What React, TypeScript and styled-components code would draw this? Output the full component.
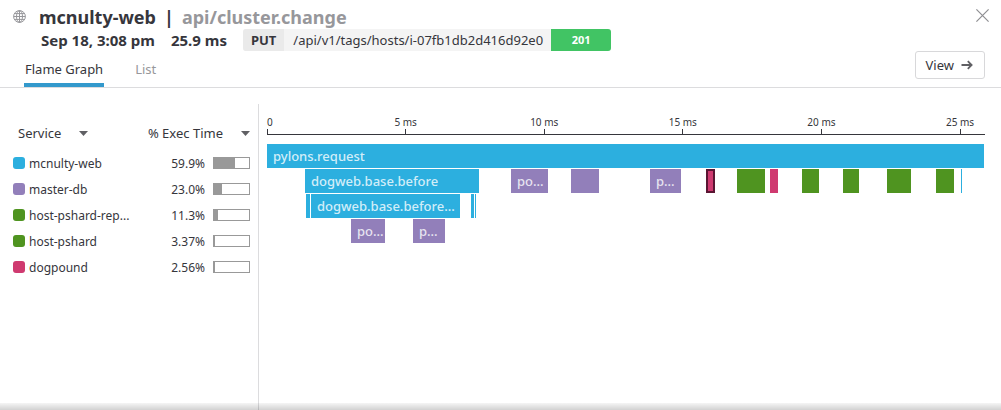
import React from "react";
import styled, { createGlobalStyle } from "styled-components";

const GlobalStyle = createGlobalStyle`
  *, *::before, *::after { box-sizing: border-box; }
  body {
    margin: 0;
    background: #fff;
    color: #36363c;
    font-family: "Noto Sans", "Open Sans", sans-serif;
    font-size: 13px;
  }
  button { font: inherit; color: inherit; cursor: pointer; }
`;

const palette = {
  blue: "#2cafdf",
  purple: "#927fba",
  green: "#4f9420",
  pink: "#cf3a70",
};

type Tone = keyof typeof palette;

const TOTAL = 25900;
const share = (us: number) => `${(us / TOTAL) * 100}%`;

interface Span {
  start: number;
  end: number;
  tone: Tone;
  label?: string;
  selected?: boolean;
}

const spanRows: Span[][] = [
  [{ start: 0, end: 25900, tone: "blue", label: "pylons.request" }],
  [
    { start: 1373, end: 7658, tone: "blue", label: "dogweb.base.before" },
    { start: 8814, end: 10151, tone: "purple", label: "po..." },
    { start: 10981, end: 11993, tone: "purple" },
    { start: 13835, end: 14955, tone: "purple", label: "p..." },
    { start: 15858, end: 16183, tone: "pink", selected: true },
    { start: 16978, end: 17989, tone: "green" },
    { start: 18170, end: 18459, tone: "pink" },
    { start: 19326, end: 19940, tone: "green" },
    { start: 20807, end: 21385, tone: "green" },
    { start: 22396, end: 23263, tone: "green" },
    { start: 24166, end: 24817, tone: "green" },
    { start: 25069, end: 25106, tone: "blue" },
  ],
  [
    { start: 1409, end: 1553, tone: "blue" },
    { start: 1589, end: 6972, tone: "blue", label: "dogweb.base.before..." },
    { start: 7369, end: 7478, tone: "blue" },
    { start: 7514, end: 7550, tone: "blue" },
  ],
  [
    { start: 3034, end: 4263, tone: "purple", label: "po..." },
    { start: 5274, end: 6430, tone: "purple", label: "p..." },
  ],
];

const services: { name: string; percent: string; tone: Tone }[] = [
  { name: "mcnulty-web", percent: "59.9%", tone: "blue" },
  { name: "master-db", percent: "23.0%", tone: "purple" },
  { name: "host-pshard-rep...", percent: "11.3%", tone: "green" },
  { name: "host-pshard", percent: "3.37%", tone: "green" },
  { name: "dogpound", percent: "2.56%", tone: "pink" },
];

const Page = styled.div`
  position: relative;
  display: flex;
  flex-direction: column;
  min-height: 100vh;
  overflow: hidden;
`;

const Header = styled.header`
  display: flex;
  justify-content: space-between;
  padding: 6px 12px 0 13px;
  border-bottom: 1px solid #dcdcde;
`;

const HeaderMain = styled.div`
  display: flex;
  flex-direction: column;
`;

const TitleRow = styled.div`
  display: flex;
  align-items: flex-start;
  gap: 13px;
  height: 23px;

  svg { margin-top: 4px; }
`;

const Title = styled.h1`
  display: flex;
  gap: 8px;
  margin: 0;
  font-size: 18px;
  line-height: 23px;
  font-weight: 700;
  white-space: nowrap;
`;

const Resource = styled.span`
  color: #97979b;
`;

const MetaRow = styled.div`
  display: flex;
  align-items: center;
  gap: 16px;
  height: 22px;
  padding-left: 28px;
  font-size: 15px;
  font-weight: 700;
  white-space: nowrap;
`;

const Request = styled.div`
  display: flex;
  height: 22px;
  line-height: 22px;
  border-radius: 3px;
  overflow: hidden;
  background: #f4f4f4;
  font-size: 13px;
`;

const Method = styled.span`
  padding: 0 8px;
  background: #eaeaea;
`;

const Path = styled.span`
  padding: 0 8px 0 9px;
  font-weight: 400;
`;

const Status = styled.span`
  width: 60px;
  background: #41c464;
  color: #fff;
  font-size: 11px;
  text-align: center;
`;

const Tabs = styled.nav`
  display: flex;
  gap: 30px;
  padding-left: 11px;
`;

const Tab = styled.button<{ $active?: boolean }>`
  height: 36px;
  padding: 4px 1px 0;
  border: 0;
  border-bottom: 4px solid ${(p) => (p.$active ? "#3399cc" : "transparent")};
  background: none;
  color: ${(p) => (p.$active ? "#36363c" : "#97979b")};
  line-height: 28px;
`;

const HeaderActions = styled.div`
  display: flex;
  flex-direction: column;
  align-items: flex-end;
  gap: 29px;
  padding-top: 3px;
`;

const CloseButton = styled.button`
  display: flex;
  padding: 0;
  border: 0;
  background: none;
`;

const ViewButton = styled.button`
  display: flex;
  align-items: center;
  gap: 7px;
  height: 28px;
  margin-right: 4px;
  padding: 0 11px 0 10px;
  border: 1px solid #d8d8da;
  border-radius: 3px;
  background: #fff;
`;

const Main = styled.main`
  display: flex;
  flex: 1;
  padding-top: 16px;
`;

const Sidebar = styled.aside`
  flex: none;
  width: 259px;
  padding: 12px 8px 0 13px;
  border-right: 1px solid #dcdcde;
`;

const ServiceTable = styled.table`
  width: 100%;
  border-collapse: collapse;
  table-layout: fixed;

  th, td { padding: 0; }
  th { height: 34px; font-weight: 400; }
  td { height: 26px; font-size: 12px; }
`;

const SortButton = styled.button<{ $end?: boolean }>`
  display: flex;
  align-items: center;
  justify-content: ${(p) => (p.$end ? "flex-end" : "flex-start")};
  gap: 18px;
  width: 100%;
  padding: 0 0 0 ${(p) => (p.$end ? "0" : "5px")};
  border: 0;
  background: none;
  white-space: nowrap;
`;

const ServiceCell = styled.div`
  display: flex;
  align-items: center;
  gap: 4px;
  white-space: nowrap;
`;

const Swatch = styled.span<{ $tone: Tone }>`
  width: 12px;
  height: 12px;
  border-radius: 3px;
  background: ${(p) => palette[p.$tone]};
`;

const ExecCell = styled.div`
  display: flex;
  align-items: center;
  justify-content: flex-end;
  gap: 8px;
`;

const ExecBar = styled.div`
  width: 37px;
  height: 12px;
  border: 1px solid #999;
`;

const ExecFill = styled.div`
  height: 100%;
  background: #999;
`;

const Graph = styled.section`
  flex: 1;
  min-width: 0;
  padding: 12px 16px 0 8px;
`;

const Axis = styled.div`
  display: flex;
  height: 19px;
  border-bottom: 1px solid #36363c;
  font-size: 10px;
  line-height: 13px;
  white-space: nowrap;
`;

const Tick = styled.div<{ $first?: boolean }>`
  display: flex;
  flex-direction: column;
  align-items: ${(p) => (p.$first ? "flex-start" : "center")};
  width: 0;

  &::after {
    content: "";
    flex: 1;
    border-left: 1px solid #36363c;
  }
`;

const SpanRows = styled.div`
  display: flex;
  flex-direction: column;
  gap: 1px;
  margin-right: 1px;
  padding-top: 9px;
`;

const SpanRow = styled.div`
  display: flex;
  height: 24px;
`;

const SpanBar = styled.div<{ $tone: Tone; $selected?: boolean; $labelled: boolean }>`
  flex: none;
  padding-left: ${(p) => (p.$labelled ? "6px" : "0")};
  border: ${(p) => (p.$selected ? "2px solid #5a1533" : "0")};
  background: ${(p) => palette[p.$tone]};
  color: rgba(255, 255, 255, 0.8);
  font-weight: 500;
  line-height: 24px;
  white-space: nowrap;
  overflow: hidden;
`;

const BottomShade = styled.div`
  position: absolute;
  inset: auto 0 0 0;
  height: 7px;
  background: linear-gradient(rgba(0, 0, 0, 0.04), rgba(0, 0, 0, 0.18));
  pointer-events: none;
`;

const GlobeIcon = () => (
  <svg width="13" height="13" viewBox="0 0 13 13" fill="none" stroke="#97979b" strokeWidth="1" aria-hidden="true">
    <circle cx="6.5" cy="6.5" r="5.9" />
    <ellipse cx="6.5" cy="6.5" rx="3" ry="5.9" />
    <path d="M6.5 .6v11.8M.6 6.5h11.8M1.5 3.6h10M1.5 9.4h10" />
  </svg>
);

const CloseIcon = () => (
  <svg width="13" height="13" viewBox="0 0 13 13" fill="none" stroke="#8e8e92" strokeWidth="1.2" aria-hidden="true">
    <path d="M.4 .4l12.2 12.2M12.6 .4L.4 12.6" />
  </svg>
);

const ArrowIcon = () => (
  <svg width="12" height="10" viewBox="0 0 12 10" fill="none" stroke="#606064" strokeWidth="1.8" aria-hidden="true">
    <path d="M.5 5h10M6.8 1.2L10.6 5 6.8 8.8" />
  </svg>
);

const Caret = () => (
  <svg width="9" height="5" viewBox="0 0 9 5" fill="#606064" aria-hidden="true">
    <path d="M0 0h9L4.5 5z" />
  </svg>
);

const FlameRow = ({ spans }: { spans: Span[] }) => (
  <SpanRow>
    {spans.map((s, i) => (
      <SpanBar
        key={s.start}
        $tone={s.tone}
        $selected={s.selected}
        $labelled={Boolean(s.label)}
        style={{
          marginLeft: share(s.start - (i ? spans[i - 1].end : 0)),
          width: share(s.end - s.start),
        }}
      >
        {s.label}
      </SpanBar>
    ))}
  </SpanRow>
);

export default function App() {
  return (
    <Page>
      <GlobalStyle />
      <Header>
        <HeaderMain>
          <TitleRow>
            <GlobeIcon />
            <Title>
              <span>mcnulty-web</span>
              <span>|</span>
              <Resource>api/cluster.change</Resource>
            </Title>
          </TitleRow>
          <MetaRow>
            <span>Sep 18, 3:08 pm</span>
            <span>25.9 ms</span>
            <Request>
              <Method>PUT</Method>
              <Path>/api/v1/tags/hosts/i-07fb1db2d416d92e0</Path>
              <Status>201</Status>
            </Request>
          </MetaRow>
          <Tabs>
            <Tab $active>Flame Graph</Tab>
            <Tab>List</Tab>
          </Tabs>
        </HeaderMain>
        <HeaderActions>
          <CloseButton aria-label="Close">
            <CloseIcon />
          </CloseButton>
          <ViewButton>
            View
            <ArrowIcon />
          </ViewButton>
        </HeaderActions>
      </Header>
      <Main>
        <Sidebar>
          <ServiceTable>
            <thead>
              <tr>
                <th>
                  <SortButton>
                    Service
                    <Caret />
                  </SortButton>
                </th>
                <th>
                  <SortButton $end>
                    % Exec Time
                    <Caret />
                  </SortButton>
                </th>
              </tr>
            </thead>
            <tbody>
              {services.map((s) => (
                <tr key={s.name}>
                  <td>
                    <ServiceCell>
                      <Swatch $tone={s.tone} />
                      {s.name}
                    </ServiceCell>
                  </td>
                  <td>
                    <ExecCell>
                      {s.percent}
                      <ExecBar>
                        <ExecFill style={{ width: s.percent }} />
                      </ExecBar>
                    </ExecCell>
                  </td>
                </tr>
              ))}
            </tbody>
          </ServiceTable>
        </Sidebar>
        <Graph>
          <Axis>
            {[0, 5, 10, 15, 20, 25].map((ms) => (
              <Tick key={ms} $first={ms === 0} style={{ marginLeft: ms ? share(5000) : 0 }}>
                {ms ? `${ms} ms` : "0"}
              </Tick>
            ))}
          </Axis>
          <SpanRows>
            {spanRows.map((spans, i) => (
              <FlameRow key={i} spans={spans} />
            ))}
          </SpanRows>
        </Graph>
      </Main>
      <BottomShade />
    </Page>
  );
}
